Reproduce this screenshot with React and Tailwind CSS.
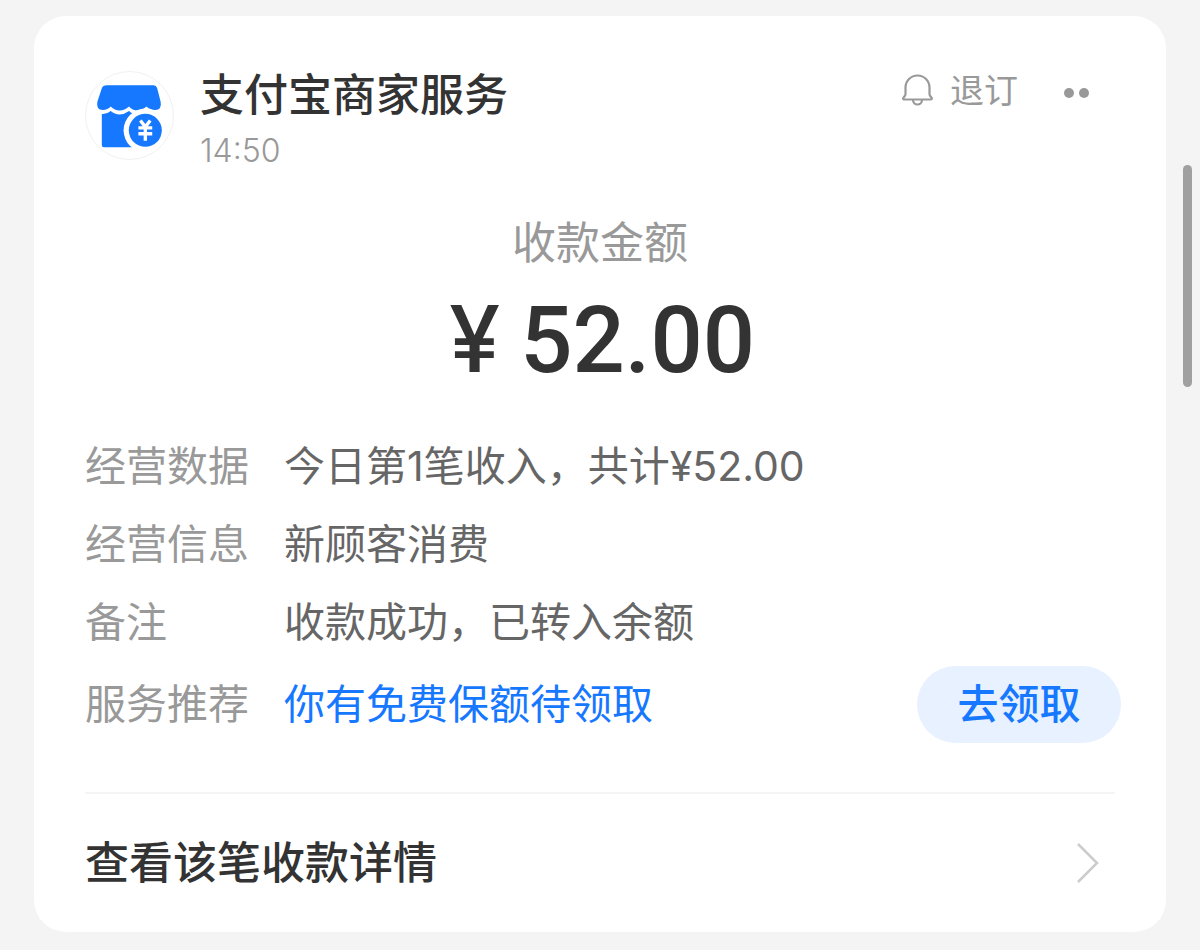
import React from 'react';

const rows = [
  { label: '经营数据', value: '今日第1笔收入，共计¥52.00' },
  { label: '经营信息', value: '新顾客消费' },
  { label: '备注', value: '收款成功，已转入余额' },
];

const ShopLogo = () => (
  <svg viewBox="0 -1 88 88" className="w-full h-full" aria-hidden="true">
    <path
      d="M21 12.500H68Q71 12.500 72 15.500L75.500 29Q77 37 70 37.500Q65 37.500 61 34Q57 38 52 38Q47 38 43.500 34Q39 38 34 38Q29 38 25 34Q22 37.500 17 37.500Q10 37 11.500 29L16 15.500Q17 12.500 21 12.500Z"
      fill="#1677ff"
    />
    <path
      d="M16 41.500Q21 42 25 38.500Q29 42 34 42Q39 42 43.500 38.500Q47 42 52 42Q57 42 61 38.500Q65 41 70 41.500V73Q70 75 68 75H18Q16 75 16 73Z"
      fill="#1677ff"
    />
    <circle cx="60" cy="58" r="22" fill="#fff" />
    <circle cx="60" cy="58" r="16.700" fill="#1677ff" />
    <path
      d="M55 48l5 6.500l5-6.500M60 54v14.500M53 55.500h14M53 61.500h14"
      fill="none"
      stroke="#fff"
      strokeWidth="3.400"
    />
  </svg>
);

const BellIcon = () => (
  <svg viewBox="1 0 32 34" className="w-8 h-[34px]" fill="none" stroke="currentColor" strokeWidth="2.200" aria-hidden="true">
    <path
      d="M4.500 13.500a12 12 0 0 1 24 0V20q0 1.400 1.200 2.600t1.200 1.900q0 1-1.200 1H3.300q-1.200 0-1.200-1 0-.700 1.200-1.900T4.500 20z"
      strokeLinejoin="round"
    />
    <path d="M12 26a4.500 4.500 0 0 0 9 0" />
  </svg>
);

const App = () => {
  return (
    <div className="relative min-h-screen bg-[#f4f4f4] px-[34px] py-4 font-['Inter','Noto_Sans_CJK_SC',sans-serif] text-[#333]">
      <main className="rounded-[32px] bg-white px-[51px] pt-[51px]">
        <header className="flex items-start">
          <div className="mt-1 w-[89px] h-[89px] shrink-0 overflow-hidden rounded-full border border-[#f1f1f1]">
            <ShopLogo />
          </div>
          <div className="ml-[26px] flex-1">
            <h1 className="text-[44px] leading-[56px] font-medium">支付宝商家服务</h1>
            <time className="block text-[32px] leading-[56px] font-light text-[#999]">14:50</time>
          </div>
          <button type="button" className="flex items-center gap-4 text-[34px] leading-[48px] text-[#999]">
            <BellIcon />
            <span>退订</span>
          </button>
          <button type="button" aria-label="更多" className="mr-[26px] ml-[46px] flex h-[52px] items-center gap-[5px]">
            <span className="h-[10px] w-[10px] rounded-full bg-[#999]"></span>
            <span className="h-[10px] w-[10px] rounded-full bg-[#999]"></span>
          </button>
        </header>

        <section className="mt-[34px] text-center">
          <h2 className="text-[44px] leading-[60px] text-[#999]">收款金额</h2>
          <p className="mt-[18px] flex items-baseline justify-center gap-5 pl-1 text-[92px] leading-[96px] font-medium">
            <span>¥</span>
            <span className="font-['Roboto',sans-serif]">52.00</span>
          </p>
        </section>

        <dl className="mt-[38px] text-[41px] leading-[78px] text-[#666]">
          {rows.map((row) => (
            <div key={row.label} className="flex">
              <dt className="w-[199px] shrink-0 text-[#999]">{row.label}</dt>
              <dd>{row.value}</dd>
            </div>
          ))}
          <div className="mt-1 -mr-[6px] flex items-center">
            <dt className="w-[199px] shrink-0 text-[#999]">服务推荐</dt>
            <dd className="flex flex-1 items-center justify-between">
              <a href="#coverage" className="text-[#1677ff]">你有免费保额待领取</a>
              <button type="button" className="h-[77px] w-[204px] rounded-full bg-[#e7f1ff] font-medium leading-[77px] text-[#1677ff]">
                去领取
              </button>
            </dd>
          </div>
        </dl>

        <a href="#detail" className="mt-[49px] flex h-[140px] items-center justify-between border-t-2 border-[#f5f5f5] text-[44px] font-medium">
          <span>查看该笔收款详情</span>
          <svg viewBox="0 0 22 40" className="mr-4 h-10 w-[22px]" fill="none" stroke="#ccc" strokeWidth="2.500" aria-hidden="true">
            <path d="M1 1l19 19L1 39" />
          </svg>
        </a>
      </main>

      {/* scroll indicator */}
      <div className="absolute top-[165px] right-2 h-[222px] w-[9px] rounded-full bg-[#a0a0a0]"></div>
    </div>
  );
};

export default App;
